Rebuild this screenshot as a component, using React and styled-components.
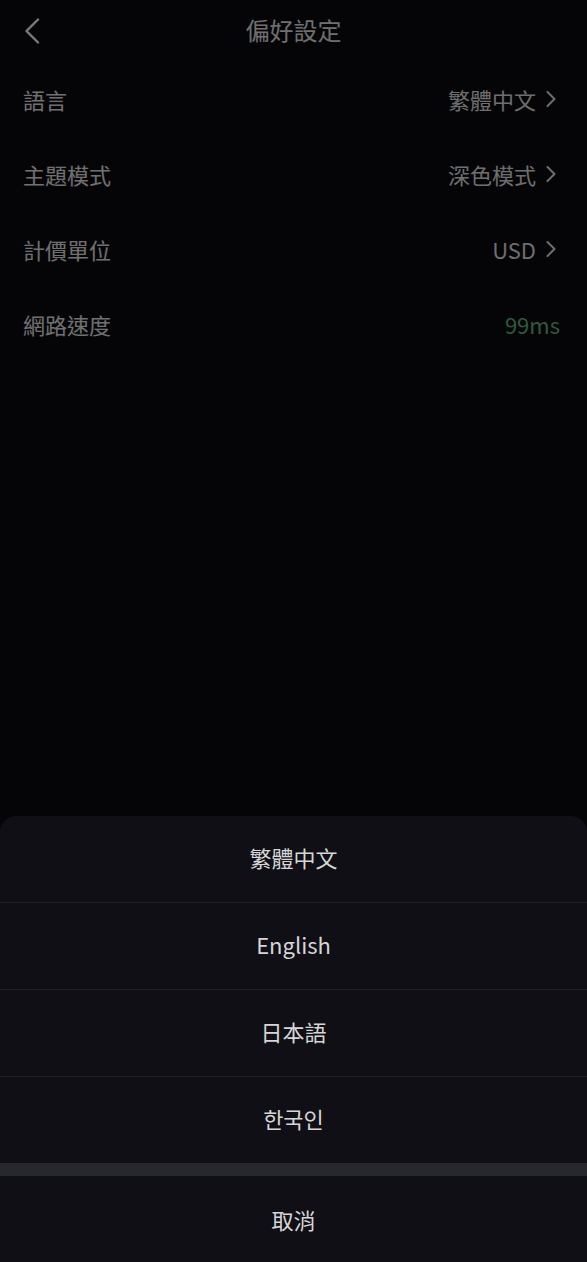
import React from 'react';
import styled, { createGlobalStyle } from 'styled-components';

const GlobalStyle = createGlobalStyle`
  * { box-sizing: border-box; }
  html, body {
    margin: 0;
    padding: 0;
    background: #0b0b10;
  }
  body {
    font-family: "Noto Sans CJK TC", "Noto Sans", sans-serif;
    -webkit-font-smoothing: antialiased;
  }
`;

const Page = styled.div`
  position: relative;
  width: 100%;
  height: 1262px;
  background: #0b0b10;
  overflow: hidden;
`;

const Header = styled.div`
  display: grid;
  grid-template-columns: 60px 1fr 60px;
  align-items: center;
  height: 62px;
`;

const BackButton = styled.button`
  display: flex;
  align-items: center;
  justify-content: flex-start;
  height: 100%;
  padding: 0 0 0 24px;
  border: 0;
  background: none;
  color: #f2f5fa;
`;

const Title = styled.h1`
  margin: 0;
  padding-bottom: 4px;
  text-align: center;
  font-size: 24px;
  font-weight: 400;
  color: #dedede;
`;

const List = styled.div`
  display: flex;
  flex-direction: column;
`;

const Row = styled.div`
  display: flex;
  align-items: center;
  justify-content: space-between;
  height: 75px;
  padding: 0 27px 2px 23px;
`;

const Label = styled.span`
  font-size: 22px;
  color: #e0e0e0;
`;

const Value = styled.span`
  display: flex;
  align-items: center;
  gap: 10px;
  font-size: 22px;
  color: ${(p) => (p.$good ? '#5cb27c' : '#dcdcdc')};
`;

const Mask = styled.div`
  position: absolute;
  inset: 0;
  background: rgba(0, 0, 0, 0.5);
`;

const Sheet = styled.div`
  position: absolute;
  left: 0;
  right: 0;
  bottom: 0;
  background: #0f0f15;
  border-radius: 16px 16px 0 0;
  overflow: hidden;
`;

const Option = styled.div`
  display: flex;
  align-items: center;
  justify-content: center;
  height: ${(p) => (p.$last ? '86px' : '87px')};
  padding-bottom: 4px;
  border-bottom: ${(p) => (p.$last ? 'none' : '1px solid #1f1f25')};
  font-size: 22px;
  color: #d6d6d6;
`;

const Band = styled.div`
  height: 13px;
  background: #26282b;
`;

const Cancel = styled.div`
  display: flex;
  align-items: center;
  justify-content: center;
  height: 86px;
  font-size: 22px;
  color: #d6d6d6;
`;

const Chevron = () => (
  <svg width="14" height="16" viewBox="0 0 14 16" fill="none">
    <polyline points="1.5,1 8.5,8 1.5,15" stroke="currentColor" strokeWidth="2" strokeLinecap="round" strokeLinejoin="round" />
  </svg>
);

const BackIcon = () => (
  <svg width="16" height="26" viewBox="0 0 16 26" fill="none">
    <polyline points="14,1.5 2.5,13 14,24.5" stroke="currentColor" strokeWidth="2.4" strokeLinecap="round" strokeLinejoin="round" />
  </svg>
);

const settings = [
  { label: '語言', value: '繁體中文', arrow: true },
  { label: '主題模式', value: '深色模式', arrow: true },
  { label: '計價單位', value: 'USD', arrow: true },
  { label: '網路速度', value: '99ms', good: true },
];

const languages = ['繁體中文', 'English', '日本語', '한국인'];

export default function App() {
  return (
    <Page>
      <GlobalStyle />
      <Header>
        <BackButton>
          <BackIcon />
        </BackButton>
        <Title>偏好設定</Title>
        <div />
      </Header>
      <List>
        {settings.map((s) => (
          <Row key={s.label}>
            <Label>{s.label}</Label>
            <Value $good={s.good}>
              {s.value}
              {s.arrow && <Chevron />}
            </Value>
          </Row>
        ))}
      </List>
      <Mask />
      <Sheet>
        {languages.map((l, i) => (
          <Option key={l} $last={i === languages.length - 1}>{l}</Option>
        ))}
        <Band />
        <Cancel>取消</Cancel>
      </Sheet>
    </Page>
  );
}
